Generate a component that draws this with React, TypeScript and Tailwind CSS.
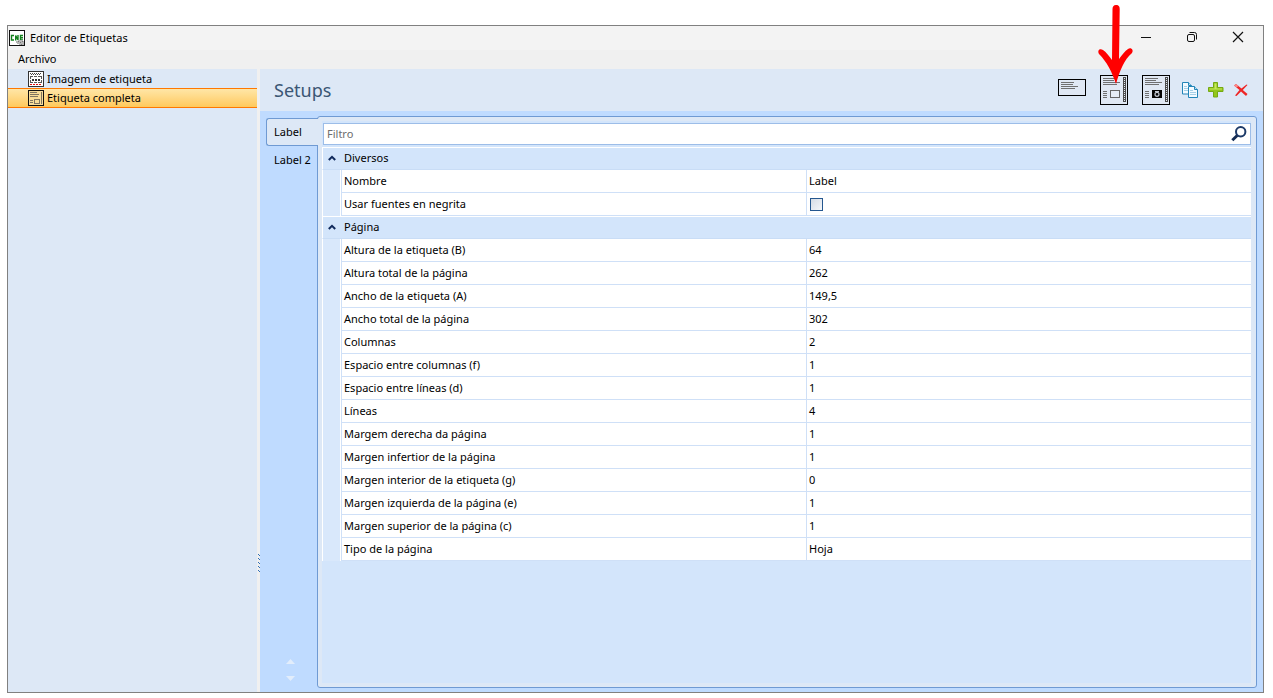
import { useState } from "react";

type Row = { name: string; value: string | boolean };
type Group = { title: string; rows: Row[] };

const groups: Group[] = [
  {
    title: "Diversos",
    rows: [
      { name: "Nombre", value: "Label" },
      { name: "Usar fuentes en negrita", value: false },
    ],
  },
  {
    title: "Página",
    rows: [
      { name: "Altura de la etiqueta (B)", value: "64" },
      { name: "Altura total de la página", value: "262" },
      { name: "Ancho de la etiqueta (A)", value: "149,5" },
      { name: "Ancho total de la página", value: "302" },
      { name: "Columnas", value: "2" },
      { name: "Espacio entre columnas (f)", value: "1" },
      { name: "Espacio entre líneas (d)", value: "1" },
      { name: "Líneas", value: "4" },
      { name: "Margem derecha da página", value: "1" },
      { name: "Margen infertior de la página", value: "1" },
      { name: "Margen interior de la etiqueta (g)", value: "0" },
      { name: "Margen izquierda de la página (e)", value: "1" },
      { name: "Margen superior de la página (c)", value: "1" },
      { name: "Tipo de la página", value: "Hoja" },
    ],
  },
];

function AppIcon() {
  return (
    <svg width="16" height="16" viewBox="0 0 16 16" aria-hidden="true">
      <rect x="0.5" y="0.5" width="15" height="15" fill="#fff" stroke="#111" />
      <path d="M5 5.5H2.5V10H5M6.700 10.500V5.500L9 10V5M14 5.500H11.500V10H14M11.500 7.700H14" fill="none" stroke="#12801c" strokeWidth="1.400" />
      <path d="M7 11h2v-1h5v1h1v4h-5v-1h-2v-1h-1z" fill="#b5b5b5" />
      <path d="M9 11h1v1h-1zM11 12h1v1h-1zM13 11h1v1h-1zM12 14h1v1h-1z" fill="#777" />
    </svg>
  );
}

function ImageLabelIcon() {
  return (
    <svg width="16" height="16" viewBox="0 0 16 16" shapeRendering="crispEdges" aria-hidden="true">
      <rect x="0.5" y="0.5" width="15" height="15" fill="#fff" stroke="#333" />
      <path d="M2 2.500h12M3 3.500h10" stroke="#444" strokeDasharray="1 1" />
      <path d="M2 5.500h12M2 11.500h12M2.500 5v7M13.500 5v7" stroke="#555" strokeDasharray="3 1" />
      <path d="M4 8.500h2M7 8.500h2M10 8.500h2" stroke="#333" strokeWidth="2" />
      <path d="M2 13.500h12" stroke="#e01010" strokeDasharray="2 1" />
    </svg>
  );
}

function FullLabelIcon() {
  return (
    <svg width="16" height="16" viewBox="0 0 16 16" shapeRendering="crispEdges" aria-hidden="true">
      <rect x="0.5" y="0.5" width="15" height="15" fill="#f8dc98" stroke="#111" />
      <path d="M2 2.500h7M2 4.500h9M2 6.500h8M2 10.500h3M2 12.500h3M13.500 2v12" stroke="#807560" />
      <rect x="6.500" y="9.500" width="5" height="4" fill="none" stroke="#807560" />
    </svg>
  );
}

function TextLabelIcon() {
  return (
    <svg width="28" height="30" viewBox="0 0 28 30" shapeRendering="crispEdges" aria-hidden="true">
      <rect x="0.5" y="4.5" width="27" height="16" fill="#e0e8f4" stroke="#000" />
      <path d="M3 7.500h13M3 9.500h12M3 11.500h17M3 13.500h14" stroke="#707070" />
    </svg>
  );
}

function PageIcon({ camera = false }: { camera?: boolean }) {
  return (
    <svg width="28" height="30" viewBox="0 0 28 30" shapeRendering="crispEdges" aria-hidden="true">
      <rect x="0.5" y="0.5" width="27" height="29" fill="#e0e8f3" stroke="#000" />
      <path d="M3 3.500h13M3 5.500h11M3 7.500h17M3 9.500h14" stroke="#707070" />
      <path d="M3 16.500h4M3 18.500h4M3 20.500h4M3 22.500h4" stroke="#707070" />
      <rect x="23" y="2" width="3" height="25" fill="#4c4c4c" />
      <path d="M24.500 3v23" stroke="#e0e8f3" strokeDasharray="1 1" />
      {camera ? (
        <g shapeRendering="auto">
          <rect x="10" y="15" width="10" height="8" fill="#050505" />
          <circle cx="15" cy="19.300" r="2" fill="#050505" stroke="#c4cad4" strokeWidth="1.200" />
          <path d="M13 16.500h4" stroke="#c4cad4" />
        </g>
      ) : (
        <rect x="10.500" y="15.500" width="9" height="7" fill="#e6edf6" stroke="#666" />
      )}
    </svg>
  );
}

function CopyIcon() {
  return (
    <svg width="16" height="16" viewBox="0 0 16 16" aria-hidden="true">
      <path d="M0.500 0.500h6l3 3v8.500h-9z" fill="#f3faff" stroke="#2385b8" />
      <path d="M6.500 0.500v3h3" fill="#b9dff2" stroke="#2385b8" />
      <path d="M2 4.500h3M2 6.500h4M2 8.500h4" stroke="#a6cfe6" />
      <path d="M6.500 4.500h6l3 3v8h-9z" fill="#f3faff" stroke="#2385b8" />
      <path d="M12.500 4.500v3h3" fill="#b9dff2" stroke="#2385b8" />
      <path d="M8 8.500h3M8 10.500h6M8 12.500h6" stroke="#a6cfe6" />
    </svg>
  );
}

function AddIcon() {
  return (
    <svg width="16" height="16" viewBox="0 0 16 16" aria-hidden="true">
      <path d="M5.500 0.500h4v5h5.500v4h-5.500v5.500h-4v-5.500h-5v-4h5z" fill="#93c71b" stroke="#74a912" />
      <path d="M6.500 1.500h2v5h5.500v1h-12.500v-1h5z" fill="#c5e75e" />
    </svg>
  );
}

function DeleteIcon() {
  return (
    <svg width="16" height="16" viewBox="0 0 16 16" aria-hidden="true">
      <path d="M1 3.500L3 2L8.500 6.500L13.500 2.500L14.500 3L9.800 8L14.500 12L13 14L8 9.500L3.500 14L2 13.500L6.500 8Z" fill="#ee2626" />
      <path d="M1 3.500L3 2L5.500 4L3.500 5.500Z" fill="#f98a8a" />
    </svg>
  );
}

function SearchIcon() {
  return (
    <svg width="16" height="16" viewBox="0 0 16 16" fill="none" aria-hidden="true">
      <circle cx="9.700" cy="5.800" r="4.700" stroke="#1d3a68" strokeWidth="2" />
      <path d="M6.200 9.500L1.300 14.300" stroke="#142c54" strokeWidth="3" />
    </svg>
  );
}

function RedArrow() {
  return (
    <svg className="pointer-events-none absolute top-1 right-[138px]" width="38" height="82" viewBox="0 0 38 82" aria-hidden="true">
      <path
        d="M19 1C22 1 22.700 3 22.700 5L22 55C25 51 28 47 31 45C34 43 37 46 35 49C27 56 23 66 19 80C15 68 10 58 2 50C0 46 3 44 6 46C9 48 12 52 15 56L15.500 5C15.500 3 16.500 1 19 1Z"
        fill="#ff0000"
      />
    </svg>
  );
}

const toolButtons = [
  { label: "Etiqueta de texto", icon: <TextLabelIcon />, style: "mr-[14px]" },
  { label: "Etiqueta con página", icon: <PageIcon />, style: "mr-[14px]" },
  { label: "Etiqueta con foto", icon: <PageIcon camera />, style: "mr-3" },
  { label: "Copiar", icon: <CopyIcon />, style: "mr-[10px]" },
  { label: "Agregar", icon: <AddIcon />, style: "mr-[9px]" },
  { label: "Eliminar", icon: <DeleteIcon />, style: "" },
];

function PropertyGrid() {
  const [open, setOpen] = useState([true, true]);
  const [bold, setBold] = useState(false);
  return (
    <table className="w-full table-fixed border-separate border-spacing-0 text-left">
      <colgroup>
        <col className="w-[19px]" />
        <col />
        <col className="w-[47.9%]" />
      </colgroup>
      {groups.map((group, g) => (
        <tbody key={group.title}>
          <tr>
            <th colSpan={3} className="h-[23px] border-t border-b border-l border-t-white border-b-[#c9ddf6] border-l-white bg-[#d3e5fb] p-0 font-normal">
              <button
                type="button"
                aria-expanded={open[g]}
                onClick={() => setOpen(open.map((o, i) => (i === g ? !o : o)))}
                className="flex h-5 w-full items-center gap-2 pb-px pl-[5px]"
              >
                <svg width="8" height="6" viewBox="0 0 8 6" fill="none" aria-hidden="true">
                  <path d="M0.800 5L4 1.800L7.200 5" stroke="#102a5c" strokeWidth="2" />
                </svg>
                {group.title}
              </button>
            </th>
          </tr>
          {open[g] &&
            group.rows.map((row) => (
              <tr key={row.name}>
                <td className="h-[23px] border-r border-l border-white bg-[#d9e8fb] p-0" />
                <th scope="row" className="h-[23px] border-b border-l border-[#cfe0f7] bg-white p-0 pl-[2px] font-normal">
                  {typeof row.value === "boolean" ? <label htmlFor="bold-fonts">{row.name}</label> : row.name}
                </th>
                <td className="h-[23px] border-b border-l border-[#cfe0f7] bg-white p-0 pl-[2px]">
                  {typeof row.value === "boolean" ? (
                    <input
                      id="bold-fonts"
                      type="checkbox"
                      checked={bold}
                      onChange={() => setBold(!bold)}
                      className="ml-px block size-[13px] appearance-none border border-[#25578f] bg-linear-to-br from-[#d5dce6] to-[#f5f7fa] checked:bg-[#25578f]"
                    />
                  ) : (
                    row.value
                  )}
                </td>
              </tr>
            ))}
        </tbody>
      ))}
    </table>
  );
}

export default function App() {
  const [tab, setTab] = useState(0);
  return (
    <div className="relative flex min-h-screen bg-white pt-[25px] pr-[9px] pb-[5px] pl-[7px] font-['Noto_Sans','Open_Sans',sans-serif] text-[11px] leading-4 text-black">
      <div className="flex min-w-0 flex-1 flex-col border border-[#808080]">
        <header className="flex h-6 items-center bg-[#f3f3f3] pl-px">
          <AppIcon />
          <h1 className="ml-[5px] flex-1">Editor de Etiquetas</h1>
          <div className="flex items-center gap-[34px] pr-[19px] pb-[3px]">
            <button type="button" aria-label="Minimizar">
              <svg width="12" height="12" viewBox="0 0 12 12" aria-hidden="true">
                <path d="M1 6.500h10" stroke="#111" />
              </svg>
            </button>
            <button type="button" aria-label="Restaurar">
              <svg width="12" height="12" viewBox="0 0 12 12" fill="none" stroke="#111" aria-hidden="true">
                <rect x="1.500" y="3.500" width="7" height="7" rx="1.500" />
                <path d="M3.500 1.500h5a2 2 0 0 1 2 2v5" />
              </svg>
            </button>
            <button type="button" aria-label="Cerrar">
              <svg width="12" height="12" viewBox="0 0 12 12" stroke="#111" strokeWidth="1.200" aria-hidden="true">
                <path d="M1 1l10 10M11 1L1 11" />
              </svg>
            </button>
          </div>
        </header>
        <nav className="flex h-[19px] items-center bg-[#f0f0f0] pb-[2px] pl-[10px]">
          <button type="button">Archivo</button>
        </nav>
        <div className="flex flex-1">
          <aside className="w-[249px] shrink-0 bg-[#dde8f6]">
            <button type="button" className="flex h-[19px] w-full items-center gap-[3px] pl-5">
              <ImageLabelIcon />
              Imagem de etiqueta
            </button>
            <button
              type="button"
              className="flex h-5 w-full items-center gap-[3px] border-y border-[#ff7800] bg-linear-to-b from-[#ffe6a6] to-[#ffc95a] pl-5"
            >
              <FullLabelIcon />
              Etiqueta completa
            </button>
          </aside>
          <div className="flex w-[3px] shrink-0 flex-col bg-[#f0f0f0] pt-[485px]">
            <svg width="3" height="20" viewBox="0 0 3 20" shapeRendering="crispEdges" aria-hidden="true">
              <path d="M1.500 0v20" stroke="#2f6fb8" strokeDasharray="1 3" />
              <path d="M2.500 1v19" stroke="#2f6fb8" strokeDasharray="1 3" />
            </svg>
          </div>
          <main className="flex min-w-0 flex-1 flex-col bg-[#bfdbff]">
            <div className="flex h-[42px] items-center bg-[#dde8f6] pr-[14px] pl-[14px]">
              <h2 className="flex-1 text-[18px] leading-6 text-[#3b5674]">Setups</h2>
              {toolButtons.map((b) => (
                <button key={b.label} type="button" aria-label={b.label} className={b.style}>
                  {b.icon}
                </button>
              ))}
            </div>
            <div className="flex flex-1 pt-[5px] pr-[6px] pb-[4px] pl-[6px]">
              <div className="z-10 -mr-px flex w-[52px] shrink-0 flex-col pt-[2px]" role="tablist">
                {["Label", "Label 2"].map((name, i) => (
                  <button
                    key={name}
                    type="button"
                    role="tab"
                    aria-selected={tab === i}
                    onClick={() => setTab(i)}
                    className={
                      tab === i
                        ? "h-7 rounded-l-[3px] border border-r-0 border-[#6f9ad3] bg-[#dde8f6] pl-[7px] text-left"
                        : "h-7 pl-2 text-left"
                    }
                  >
                    {name}
                  </button>
                ))}
                <div className="mt-auto mr-1 mb-[7px] flex flex-col items-center gap-3">
                  <svg width="9" height="5" viewBox="0 0 9 5" aria-hidden="true">
                    <path d="M0 5L4.500 0L9 5z" fill="#e2edfb" />
                  </svg>
                  <svg width="9" height="5" viewBox="0 0 9 5" aria-hidden="true">
                    <path d="M0 0h9L4.500 5z" fill="#e2edfb" />
                  </svg>
                </div>
              </div>
              <section className="flex min-w-0 flex-1 flex-col rounded-[3px] border border-[#6f9ad3] bg-[#dde8f6] py-1 pr-[5px] pl-1">
                <div className="flex flex-1 flex-col bg-[#d3e5fb]">
                  <div className="mt-[2px] mb-[2px] ml-px flex h-[22px] items-center border border-[#9cbde8] bg-white pr-[3px] pl-[3px]">
                    <input aria-label="Filtro" placeholder="Filtro" className="min-w-0 flex-1 bg-transparent outline-none placeholder:text-[#6d6d6d]" />
                    <button type="button" aria-label="Buscar">
                      <SearchIcon />
                    </button>
                  </div>
                  <PropertyGrid />
                </div>
              </section>
            </div>
          </main>
        </div>
      </div>
      <RedArrow />
    </div>
  );
}
